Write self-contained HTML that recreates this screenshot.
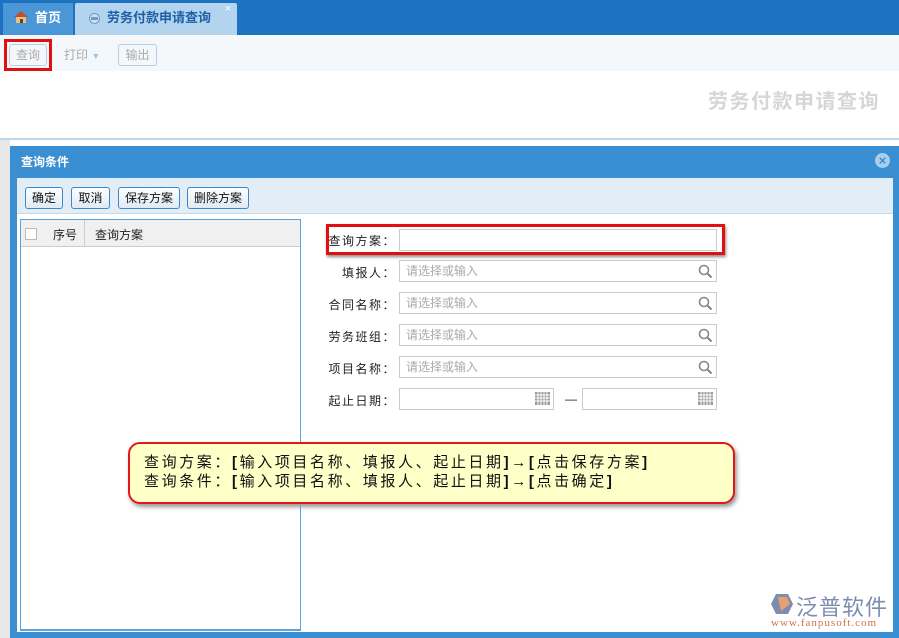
<!DOCTYPE html>
<html><head><meta charset="utf-8"><style>
*{margin:0;padding:0;box-sizing:border-box}
body{width:899px;height:638px;overflow:hidden;background:#fff;font-family:"Liberation Sans","Noto Sans CJK SC",sans-serif;font-size:12px;position:relative;color:#222}
.a{position:absolute}
.btn{position:absolute;height:22px;border:1px solid #b8cde0;border-radius:3px;background:#f4f8fb;color:#aaa;font-size:12px;line-height:20px;text-align:center}
.db{position:absolute;top:187px;height:22px;border:1px solid #3d88c8;border-radius:3px;background:linear-gradient(#fdfeff,#e0ebf5);font-size:12px;line-height:20px;text-align:center;color:#111}
.lbl{position:absolute;width:80px;text-align:right;font-size:12px;left:316px;letter-spacing:1.5px}
.inp{position:absolute;left:399px;width:318px;height:22px;border:1px solid #ccc;background:#fff;color:#aaa;font-size:12px;line-height:20px;padding-left:6px}
.mag{position:absolute;right:3px;top:3px}
</style></head><body>
<div class="a" style="left:0;top:0;width:899px;height:35px;background:#1e72c2"></div>
<div class="a" style="left:3px;top:3px;width:70px;height:32px;background:#4a96d6;color:#fff;font-weight:bold;font-size:13px;line-height:30px;padding-left:32px">首页</div>
<svg class="a" style="left:13px;top:10px" width="16" height="14"><path d="M1 7L8 1L15 7Z" fill="#c0502a"/><rect x="3" y="7" width="10" height="6" fill="#e8c080"/><rect x="7" y="9" width="3" height="4" fill="#6a4020"/></svg>
<div class="a" style="left:75px;top:3px;width:162px;height:32px;background:#b3d4ee;color:#1b5fa8;font-weight:bold;font-size:13px;line-height:30px;padding-left:32px;border-radius:2px 2px 0 0">劳务付款申请查询</div>
<div class="a" style="left:89px;top:13px;width:11px;height:11px;border-radius:50%;background:#cfe0ef;border:1px solid #6f9bc4"><div style="margin:3px 1px;height:3px;background:#6f9bc4"></div></div>
<div class="a" style="left:225px;top:3px;color:#fff;font-size:11px">×</div>
<div class="a" style="left:0;top:35px;width:899px;height:36px;background:#f5f8fb"></div>
<div class="btn" style="left:9px;top:44px;width:38px">查询</div>
<div class="a" style="left:4px;top:39px;width:48px;height:32px;border:3px solid #e01010"></div>
<div class="btn" style="left:58px;top:44px;width:52px;border-color:transparent;background:none;text-align:left;padding-left:5px">打印 <span style="color:#9cc8ea;font-size:9px">▼</span></div>
<div class="btn" style="left:118px;top:44px;width:39px">输出</div>
<div class="a" style="left:708px;top:85px;font-size:20px;font-weight:bold;color:#d6d6d6;letter-spacing:1.5px">劳务付款申请查询</div>
<div class="a" style="left:0;top:138px;width:899px;height:2px;background:#bcd8ee"></div>
<div class="a" style="left:0;top:140px;width:10px;height:498px;background:#e8e8e8"></div>
<div class="a" style="left:10px;top:146px;width:889px;height:492px;background:#3a8fd2"></div>
<div class="a" style="left:21px;top:153px;color:#fff;font-weight:bold;font-size:12px">查询条件</div>
<div class="a" style="left:875px;top:153px;width:15px;height:15px;border-radius:50%;background:#a9cdea;color:#3a8fd2;font-size:13px;font-weight:bold;line-height:15px;text-align:center">×</div>
<div class="a" style="left:17px;top:178px;width:876px;height:454px;background:#fff"></div>
<div class="a" style="left:17px;top:178px;width:876px;height:36px;background:#e3edf6;border-bottom:1px solid #c8d8e6"></div>
<div class="db" style="left:25px;width:38px">确定</div>
<div class="db" style="left:71px;width:39px">取消</div>
<div class="db" style="left:118px;width:62px">保存方案</div>
<div class="db" style="left:187px;width:62px">删除方案</div>
<div class="a" style="left:20px;top:219px;width:281px;height:412px;border:1px solid #5aa3dc;border-bottom-width:2px"></div>
<div class="a" style="left:21px;top:220px;width:279px;height:27px;background:#f0f0f0;border-bottom:1px solid #ccc"></div>
<div class="a" style="left:84px;top:220px;width:1px;height:27px;background:#ccc"></div>
<div class="a" style="left:25px;top:228px;width:12px;height:12px;border:1px solid #bbb;background:#fff"></div>
<div class="a" style="left:53px;top:226px;font-size:12px">序号</div>
<div class="a" style="left:95px;top:226px;font-size:12px">查询方案</div>
<div class="lbl" style="top:232px">查询方案：</div>
<div class="inp" style="top:229px"></div>
<div class="a" style="left:326px;top:224px;width:399px;height:31px;border:3px solid #e01010;box-shadow:1px 2px 3px #888"></div>
<div class="lbl" style="top:264px">填报人：</div>
<div class="inp" style="top:260px">请选择或输入<svg class="mag" width="15" height="15"><circle cx="6" cy="6" r="4.5" stroke="#888" stroke-width="1.6" fill="none"/><path d="M9.5 9.5L13.5 13.5" stroke="#888" stroke-width="2.2"/></svg></div>
<div class="lbl" style="top:296px">合同名称：</div>
<div class="inp" style="top:292px">请选择或输入<svg class="mag" width="15" height="15"><circle cx="6" cy="6" r="4.5" stroke="#888" stroke-width="1.6" fill="none"/><path d="M9.5 9.5L13.5 13.5" stroke="#888" stroke-width="2.2"/></svg></div>
<div class="lbl" style="top:328px">劳务班组：</div>
<div class="inp" style="top:324px">请选择或输入<svg class="mag" width="15" height="15"><circle cx="6" cy="6" r="4.5" stroke="#888" stroke-width="1.6" fill="none"/><path d="M9.5 9.5L13.5 13.5" stroke="#888" stroke-width="2.2"/></svg></div>
<div class="lbl" style="top:360px">项目名称：</div>
<div class="inp" style="top:356px">请选择或输入<svg class="mag" width="15" height="15"><circle cx="6" cy="6" r="4.5" stroke="#888" stroke-width="1.6" fill="none"/><path d="M9.5 9.5L13.5 13.5" stroke="#888" stroke-width="2.2"/></svg></div>
<div class="lbl" style="top:392px">起止日期：</div>
<div class="inp" style="top:388px;width:155px"><svg class="mag" width="15" height="13"><rect width="15" height="13" fill="#999"/><path d="M0 3H15M0 6H15M0 9H15M3 0V13M6 0V13M9 0V13M12 0V13" stroke="#fff" stroke-width="1"/></svg></div>
<div class="a" style="left:565px;top:392px">—</div>
<div class="inp" style="top:388px;left:582px;width:135px"><svg class="mag" width="15" height="13"><rect width="15" height="13" fill="#999"/><path d="M0 3H15M0 6H15M0 9H15M3 0V13M6 0V13M9 0V13M12 0V13" stroke="#fff" stroke-width="1"/></svg></div>
<div class="a" style="left:128px;top:442px;width:607px;height:62px;background:#ffffc8;border:2px solid #e01818;border-radius:12px;box-shadow:2px 3px 4px #999;padding:9px 0 0 14px;font-size:15px;line-height:19px;color:#111;letter-spacing:2.6px;white-space:nowrap">查询方案：<b>[</b>输入项目名称、填报人、起止日期<b>]</b>→<b>[</b>点击保存方案<b>]</b><br>查询条件：<b>[</b>输入项目名称、填报人、起止日期<b>]</b>→<b>[</b>点击确定<b>]</b></div>
<svg class="a" style="left:770px;top:593px" width="24" height="22"><path d="M6 1H18L23 11L18 21H6L1 11Z" fill="#7d8db0"/><path d="M8 4H17L20 11L11 18Z" fill="#e8a070"/></svg>
<div class="a" style="left:796px;top:590px;font-size:22px;color:#7d8db0;letter-spacing:1px">泛普软件</div>
<div class="a" style="left:771px;top:617px;font-family:'Liberation Serif',serif;font-size:11px;color:#d07050;letter-spacing:1px">www.fanpusoft.com</div>
</body></html>
